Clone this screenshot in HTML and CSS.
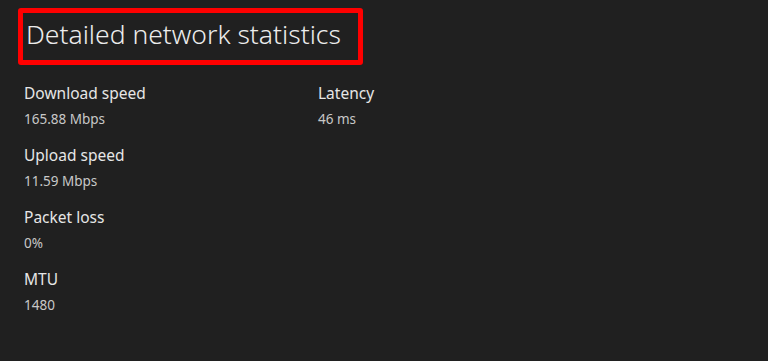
FILE: index.html
```html
<!DOCTYPE html>
<html lang="en">
<head>
    <meta charset="UTF-8">
    <meta name="viewport" content="width=device-width, initial-scale=1.0">
    <title>Detailed network statistics</title>
    <link rel="stylesheet" href="styles.css">
</head>
<body>
    <div class="page">
        <div class="title-box">
            <h1>Detailed network statistics</h1>
        </div>

        <!-- Statistiques -->
        <div class="stats">
            <div class="stat">
                <div class="label">Download speed</div>
                <div class="value">165.88 Mbps</div>
            </div>
            <div class="stat">
                <div class="label">Latency</div>
                <div class="value">46 ms</div>
            </div>
            <div class="stat">
                <div class="label">Upload speed</div>
                <div class="value">11.59 Mbps</div>
            </div>
            <div class="stat empty"></div>
            <div class="stat">
                <div class="label">Packet loss</div>
                <div class="value">0%</div>
            </div>
            <div class="stat empty"></div>
            <div class="stat">
                <div class="label">MTU</div>
                <div class="value">1480</div>
            </div>
        </div>
    </div>
</body>
</html>
```

FILE: styles.css
```css
body {
    margin: 0;
    padding: 0;
    background-color: #202020;
    font-family: "Noto Sans", "Open Sans", sans-serif;
    color: #e8e8e8;
}
.page {
    width: 768px;
    height: 361px;
    padding: 8px 0 0 0;
    box-sizing: border-box;
}
.title-box {
    margin-left: 18px;
    width: 345px;
    height: 57px;
    box-sizing: border-box;
    border: 5px solid #ff0000;
    border-radius: 3px;
    padding: 3px 0 0 3px;
}
h1 {
    margin: 0;
    font-size: 26.5px;
    font-weight: 300;
    line-height: 36px;
    color: #ececec;
}
.stats {
    display: grid;
    grid-template-columns: 294px auto;
    padding: 18px 0 0 24px;
}
.stat {
    height: 62px;
}
.label {
    font-size: 15.5px;
    line-height: 20px;
    color: #e6e6e6;
}
.value {
    font-size: 13.5px;
    line-height: 20px;
    margin-top: 6px;
    color: #c8c8c8;
}
```
